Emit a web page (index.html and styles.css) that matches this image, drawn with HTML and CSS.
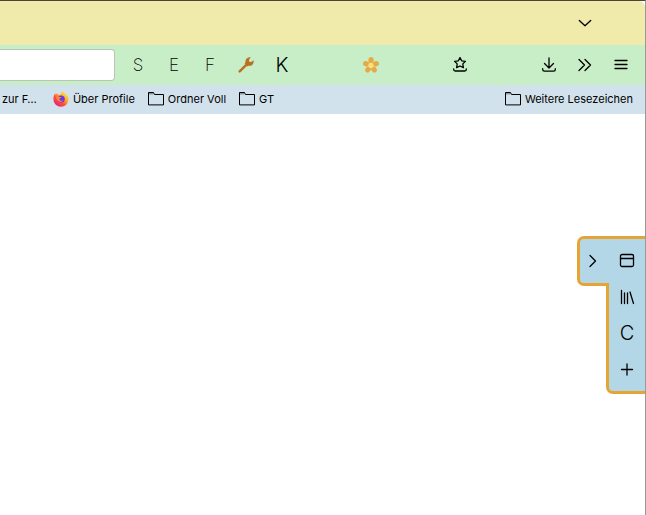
FILE: index.html
```html
<!DOCTYPE html>
<html lang="de">
<head>
<meta charset="utf-8">
<meta name="viewport" content="width=device-width, initial-scale=1">
<title>Browser</title>
<link rel="stylesheet" href="styles.css">
</head>
<body>
<div class="window">
  <header class="tab-bar">
    <button class="tool" type="button" aria-label="Alle Tabs">
      <svg class="icon" viewBox="0 0 16 16"><path d="M2.3 5.500 8 10.800l5.700-5.300"/></svg>
    </button>
  </header>
  <nav class="nav-bar" aria-label="Navigation">
    <input class="address" type="text" aria-label="Adresse">
    <div class="tools">
      <button class="tool letter" type="button">S</button>
      <button class="tool letter" type="button">E</button>
      <button class="tool letter" type="button">F</button>
      <button class="tool" type="button" aria-label="Werkzeug">
        <svg class="icon wrench" viewBox="0 0 16 16"><path class="handle" d="M1.700 14.400 9 7.100"/><path class="head" d="M12.800.3 10.900 2.900l.4 1.800 1.800.4 2.500-1.900c.5 3.700-2 6.100-5 5.600L9.600 9.400 6.700 6.500l.8-1.200C7 2.300 9.500-.1 12.800.3Z"/></svg>
      </button>
      <button class="tool letter large" type="button">K</button>
    </div>
    <span class="spring"></span>
    <button class="tool" type="button" aria-label="Blume">
      <svg class="icon flower" viewBox="0 0 16 16">
        <g class="petals">
          <ellipse cx="8" cy="3.300" rx="2.600" ry="3.200"/>
          <ellipse cx="8" cy="3.300" rx="2.600" ry="3.200" transform="rotate(72 8 8.400)"/>
          <ellipse cx="8" cy="3.300" rx="2.600" ry="3.200" transform="rotate(144 8 8.400)"/>
          <ellipse cx="8" cy="3.300" rx="2.600" ry="3.200" transform="rotate(216 8 8.400)"/>
          <ellipse cx="8" cy="3.300" rx="2.600" ry="3.200" transform="rotate(288 8 8.400)"/>
        </g>
        <circle class="heart" cx="8" cy="8.400" r="2.600"/>
      </svg>
    </button>
    <span class="spring"></span>
    <button class="tool" type="button" aria-label="Lesezeichen-Menü">
      <svg class="icon" viewBox="0 0 16 16"><path d="m8 .6 1.700 3.200 3.700.6-2.600 2.500.6 3.700L8 9l-3.400 1.600.6-3.700-2.600-2.500 3.700-.6ZM1.700 12v.5q0 1.500 1.500 1.500h9.600q1.500 0 1.500-1.500V12"/></svg>
    </button>
    <span class="spring"></span>
    <div class="tools">
      <button class="tool" type="button" aria-label="Downloads">
        <svg class="icon" viewBox="0 0 16 16"><path d="M8 .8v10M3.500 6.500 8 11l4.500-4.500M1.700 11.700v.8q0 1.700 1.700 1.700h9.200q1.700 0 1.700-1.700v-.8"/></svg>
      </button>
      <button class="tool" type="button" aria-label="Weitere Werkzeuge">
        <svg class="icon" viewBox="0 0 16 16"><path d="m2 2.500 5.500 5.500L2 13.500M8 2.500 13.500 8 8 13.500"/></svg>
      </button>
      <button class="tool" type="button" aria-label="Anwendungsmenü">
        <svg class="icon" viewBox="0 0 16 16"><path d="M2 3.500h12M2 7.500h12M2 11.500h12"/></svg>
      </button>
    </div>
  </nav>
  <nav class="bookmarks" aria-label="Lesezeichen">
    <a class="bookmark" href="#">zur F…</a>
    <a class="bookmark" href="#">
      <svg class="icon firefox" viewBox="0 0 16 16">
        <defs>
          <linearGradient id="flame" x1=".85" y1=".1" x2=".2" y2=".9"><stop offset="0" stop-color="#ffe14a"/><stop offset=".35" stop-color="#ffb02e"/><stop offset=".65" stop-color="#ff5038"/><stop offset="1" stop-color="#e8207c"/></linearGradient>
        </defs>
        <path fill="url(#flame)" d="M15.300 6.200C14.900 4.600 13.800 3.300 13 2.900c.4.800.6 1.500.7 2C12.500 2.300 10.500 1.700 9.600.2 8.200 1 7.900 2.400 8 3.200 6.800 3.200 6 3.600 5.300 4 4.700 3.500 4.600 2.700 4.600 2.100c-.8.400-1.400 1-1.800 1.600C2.500 3.500 2.400 2.600 2.500 2 1.100 3.300.4 5.600.4 8a7.600 7.600 0 0 0 15.200.3q0-1.200-.3-2.100Z"/>
        <circle cx="8.200" cy="8" r="3.600" fill="#7137dc"/>
        <path fill="#ff8a2b" d="M3.200 5.800c1.300-.9 2.700-.3 3.300.1l1.900.2c0 .9-1.800 1-1.900 1.800-.1 1.700 1.900 2.300 3.700 1.200-.6 2-3.700 2.600-5.500.4-1-.9-1.300-2-1.500-3.700Z"/>
      </svg>
      Über Profile
    </a>
    <a class="bookmark" href="#">
      <svg class="icon folder" viewBox="0 0 16 16"><path class="tab" d="M.5 1.500h5v2h-5Z"/><path d="M.5 13.500v-12h5l1 2h9v10Z"/></svg>
      Ordner Voll
    </a>
    <a class="bookmark" href="#">
      <svg class="icon folder" viewBox="0 0 16 16"><path class="tab" d="M.5 1.500h5v2h-5Z"/><path d="M.5 13.500v-12h5l1 2h9v10Z"/></svg>
      GT
    </a>
    <a class="bookmark other" href="#">
      <svg class="icon folder" viewBox="0 0 16 16"><path class="tab" d="M.5 1.500h5v2h-5Z"/><path d="M.5 13.500v-12h5l1 2h9v10Z"/></svg>
      Weitere Lesezeichen
    </a>
  </nav>
  <main class="content">
    <div class="toggle">
      <button class="tool" type="button" aria-label="Leiste umschalten">
        <svg class="icon" viewBox="0 0 16 16"><path d="M5 2.500 10.500 8 5 13.500"/></svg>
      </button>
    </div>
    <aside class="side-bar">
      <button class="tool" type="button" aria-label="Fenster">
        <svg class="icon" viewBox="0 0 16 16"><rect x="1.500" y="1.500" width="13" height="12" rx="1.500"/><path d="M1.500 5.500h13"/></svg>
      </button>
      <button class="tool" type="button" aria-label="Bibliothek">
        <svg class="icon" viewBox="0 0 16 16"><path d="M2.500 1.500v13M5.500 4v10.500M8.500 4v10.500M11 3l3.500 11.500"/></svg>
      </button>
      <button class="tool letter large" type="button">C</button>
      <button class="tool" type="button" aria-label="Neuer Tab">
        <svg class="icon" viewBox="0 0 16 16"><path d="M8 3v11M2.500 8.500h11"/></svg>
      </button>
    </aside>
  </main>
</div>
</body>
</html>
```
FILE: styles.css
```css
* {
  box-sizing: border-box;
}

body {
  margin: 0;
  background: #fff;
  color: #000;
  font-family: Inter, "Liberation Sans", sans-serif;
  font-size: 11px;
}

.window {
  display: flex;
  flex-direction: column;
  min-height: 100vh;
  border-top: 1px solid #4b4438;
  border-right: 1px solid #999;
}

.tab-bar {
  display: flex;
  align-items: center;
  justify-content: flex-end;
  height: 44px;
  padding-right: 42px;
  border-top-right-radius: 6px;
  background: #f0eaab;
}

.nav-bar {
  display: flex;
  align-items: center;
  height: 40px;
  padding-right: 6px;
  background: #c7eec6;
}

.address {
  flex: 0 1 115px;
  min-width: 0;
  height: 32px;
  margin-right: 5px;
  border: 1px solid #b9c5b7;
  border-left: 0;
  border-radius: 0 4px 4px 0;
  background: #fff;
  font: inherit;
}

.tools {
  display: flex;
}

.spring {
  flex: 1;
}

.tool {
  display: flex;
  flex: none;
  align-items: center;
  justify-content: center;
  width: 36px;
  height: 36px;
  padding: 0;
  border: 0;
  background: none;
  color: inherit;
  font: inherit;
}

.letter {
  font-size: 17px;
  font-weight: 200;
}

.large {
  font-size: 20px;
  font-weight: 300;
}

.icon {
  flex: none;
  width: 16px;
  height: 16px;
  fill: none;
  stroke: currentColor;
  stroke-width: 1.3;
  stroke-linecap: round;
  stroke-linejoin: round;
}

.wrench .handle {
  stroke: #b9701f;
  stroke-width: 2.4;
}

.wrench .head {
  fill: #b9701f;
  stroke: none;
}

.flower {
  stroke: none;
}

.petals {
  fill: #e6aa45;
}

.heart {
  fill: #f8df80;
}

.firefox {
  stroke: none;
}

.folder {
  stroke-width: 1;
  stroke-linejoin: miter;
}

.folder .tab {
  fill: #8c959c;
  stroke: none;
}

.bookmarks {
  display: flex;
  align-items: center;
  gap: 13px;
  height: 29px;
  padding: 0 12px 1px 2px;
  background: #d2e2ec;
}

.bookmark {
  display: flex;
  align-items: center;
  gap: 4px;
  color: inherit;
  line-height: 16px;
  text-decoration: none;
  white-space: nowrap;
}

.bookmark:first-child {
  margin-right: 3px;
}

.other {
  margin-left: auto;
}

.content {
  display: flex;
  flex: 1;
  align-items: flex-start;
  justify-content: flex-end;
  padding-top: 122px;
}

.toggle,
.side-bar {
  border: 3px solid #e6a532;
  border-right: 0;
  background: #b4d7e7;
}

.toggle {
  z-index: 1;
  display: flex;
  align-items: center;
  justify-content: center;
  width: 32px;
  height: 50px;
  margin-right: -3px;
  padding-right: 3px;
  border-radius: 7px 0 0 7px;
}

.side-bar {
  padding: 4px 0;
  border-radius: 0 0 0 7px;
}
```
